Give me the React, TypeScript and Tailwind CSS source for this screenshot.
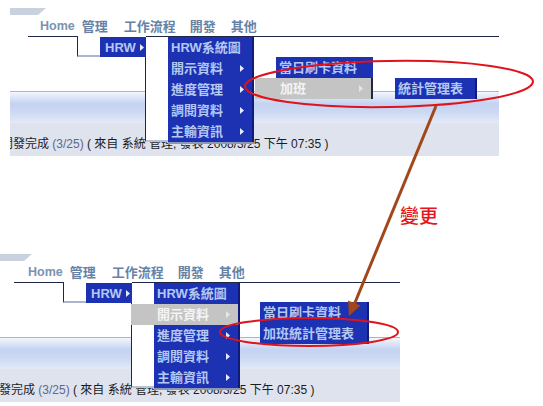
import React from "react";

/* Two captures of the same portal menu (before / after), with the red
   call-out ellipses and the brown "變更" arrow drawn over them. */

const FONT = "font-['Liberation_Sans','Noto_Sans_CJK_TC',sans-serif]";

function Tri({ c = "#e4ecff" }: { c?: string }) {
  return (
    <svg width="4" height="7" viewBox="0 0 4 7" className="shrink-0">
      <path d="M0 0L4 3.5L0 7Z" fill={c} />
    </svg>
  );
}

function Item({ label, arrow, hl, pad = "pl-[3px]" }: { label: string; arrow?: boolean; hl?: boolean; pad?: string }) {
  return (
    <div
      className={`flex h-[21px] items-center justify-between pr-[8px] text-[13px] font-bold leading-none ${pad} ${
        hl ? "bg-[#c4c4c4] text-[#f4f4f4]" : "text-[#b4c8f4]"
      }`}
    >
      <span>{label}</span>
      {arrow && <Tri c={hl ? "#e6e6e6" : "#e4ecff"} />}
    </div>
  );
}

function Shot({ after }: { after?: boolean }) {
  return (
    <div className={`relative h-[160px] w-[500px] ${FONT}`}>
      {/* nav strip */}
      <div className="relative h-[36px]">
        <svg className="absolute left-[10px] top-[8px]" width="36" height="7" viewBox="0 0 36 7">
          <path d="M0 0H36L28 7H0Z" fill="#c9d1df" />
        </svg>
        <div className={`flex pt-[20px] text-[13px] font-bold leading-none text-[#6582a6] ${after ? "pl-[42px]" : "pl-[40px]"}`}>
          <span className="text-[12.5px] text-[#7b93b3]">Home</span>
          <span className="ml-[7px]">管理</span>
          <span className="ml-[16px]">工作流程</span>
          <span className="ml-[14px]">開發</span>
          <span className="ml-[15px]">其他</span>
        </div>
      </div>
      <div className="ml-[28px] h-px w-[471px] bg-[#1f2647]" />
      <div className="h-[54px]" />
      {/* gradient band */}
      <div className="ml-[10px] h-[32px] w-[489px] border-t border-[#a7b6cf] bg-[linear-gradient(to_bottom,#f3f6fc_0%,#c3d3f1_38%,#cbd8f3_62%,#e3e9f7_100%)]" />
      <div className="ml-[10px] h-[33px] w-[489px] overflow-hidden bg-[#dfe3ee]">
        <div className="ml-[-9px] whitespace-nowrap pt-[15px] text-[12px] leading-none text-[#1c1c1c]">
          開發完成 <span className="text-[#5b6a8c]">(3/25)</span> ( 來自 系統 管理, 發表 2008/3/25 下午 07:35 )
        </div>
      </div>

      {/* first dropdown: white panel with HRW */}
      <div className="absolute left-[77px] top-[36px] h-[21px] w-[69px] border-b-2 border-l border-[#1f2647] border-b-[#a9b6cc] bg-white" />
      <div className="absolute left-[100px] top-[37px] flex h-[20px] w-[46px] items-center gap-[4px] bg-[#1d31b3] pl-[5px] text-[13px] font-bold leading-none text-[#b4c8f4]">
        <span>HRW</span>
        <Tri />
      </div>

      {/* second dropdown */}
      <div className="absolute left-[145px] top-[57px] h-[85px] w-[24px] border-b-2 border-l border-[#1f2647] border-b-[#b8c2d4] bg-white" />
      <div className="absolute left-[168px] top-[37px] w-[86px] border-r-2 border-[#0f1c7e] bg-[#1d31b3] shadow-[0_2px_0_#8c98b8]">
        <Item label="HRW系統圖" />
        {after ? (
          <div className="ml-[-23px]">
            <Item label="開示資料" arrow hl pad="pl-[26px]" />
          </div>
        ) : (
          <Item label="開示資料" arrow />
        )}
        <Item label="進度管理" arrow />
        <Item label="調閱資料" arrow />
        <Item label="主輸資訊" arrow />
      </div>

      {/* third level */}
      {after ? (
        <div className="absolute left-[274px] top-[56px] w-[109px] border-r-2 border-[#0f1c7e] bg-[#1d31b3]">
          <Item label="當日刷卡資料" />
          <Item label="加班統計管理表" />
        </div>
      ) : (
        <>
          <div className="absolute left-[276px] top-[57px] w-[97px] bg-[#1d31b3]">
            <Item label="當日刷卡資料" />
          </div>
          <div className="absolute left-[255px] top-[78px] w-[118px] border-r-2 border-[#1f2647] bg-[#c4c4c4]">
            <Item label="加班" arrow hl pad="pl-[25px]" />
          </div>
          <div className="absolute left-[395px] top-[78px] w-[82px] border-r-2 border-[#0f1c7e] bg-[#1d31b3]">
            <Item label="統計管理表" />
          </div>
        </>
      )}
    </div>
  );
}

export default function App() {
  return (
    <div className="relative h-[406px] w-[543px] overflow-hidden bg-white">
      <div className="h-[246px]">
        <Shot />
      </div>
      <div className="h-[160px] w-[400px] overflow-hidden">
        <div className="ml-[-14px]">
          <Shot after />
        </div>
      </div>

      {/* call-outs */}
      <svg className="pointer-events-none absolute left-0 top-0" width="543" height="406" viewBox="0 0 543 406">
        <ellipse cx="389" cy="84" rx="144" ry="23" fill="none" stroke="#e0121c" strokeWidth="2" transform="rotate(-1 389 84)" />
        <ellipse cx="309" cy="332" rx="89" ry="14" fill="none" stroke="#e0121c" strokeWidth="2" />
        <line x1="436" y1="106" x2="354" y2="305" stroke="#a2471c" strokeWidth="3" />
        <path d="M349 316L360.5 305.5L348 300.5Z" fill="#a2471c" />
      </svg>
      <div className="absolute left-[400px] top-[205px] text-[19px] font-medium leading-none text-[#e6141c] font-['Noto_Sans_CJK_TC',sans-serif]">
        變更
      </div>
    </div>
  );
}
